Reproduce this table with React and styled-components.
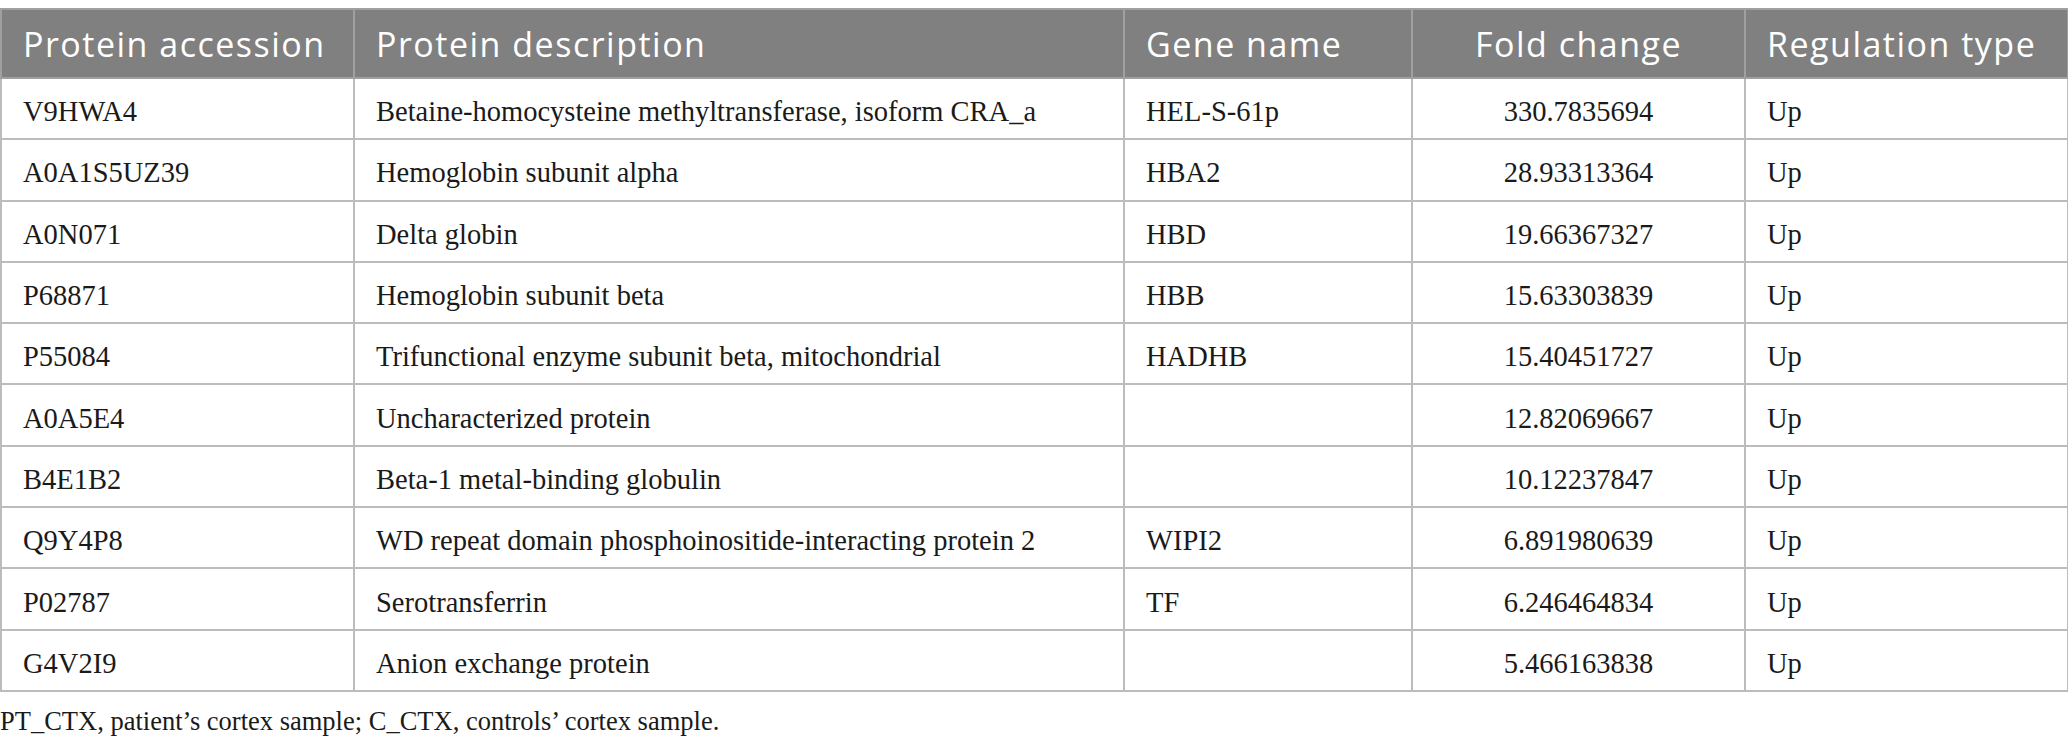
import React from "react";
import styled, { createGlobalStyle } from "styled-components";

const GlobalStyle = createGlobalStyle`
  html, body {
    margin: 0;
    padding: 0;
    background: #ffffff;
  }
`;

const Page = styled.div`
  width: 2068px;
  padding-top: 8px;
  box-sizing: border-box;
`;

const Table = styled.table`
  width: 2067px;
  border-collapse: collapse;
  table-layout: fixed;
  border: 2px solid #bcbcbc;
`;

const HeadCell = styled.th`
  height: 67px;
  padding: 0 0 0 21px;
  background: #808080;
  color: #ffffff;
  font-family: "Open Sans", "Noto Sans", sans-serif;
  font-weight: 400;
  font-size: 34px;
  letter-spacing: 1.5px;
  text-align: ${(p) => (p.$center ? "center" : "left")};
  ${(p) => p.$center && "padding-left: 0;"}
  border: 2px solid #a0a0a0;
  white-space: nowrap;
`;

const Cell = styled.td`
  height: 61.3px;
  padding: 7px 0 0 21px;
  box-sizing: border-box;
  color: #1a1a1a;
  font-family: "Liberation Serif", "Times New Roman", serif;
  font-size: 28.5px;
  text-align: ${(p) => (p.$center ? "center" : "left")};
  ${(p) => p.$center && "padding-left: 0;"}
  border: 2px solid #bcbcbc;
  white-space: nowrap;
`;

const Note = styled.p`
  margin: 14px 0 0 0;
  font-family: "Liberation Serif", "Times New Roman", serif;
  font-size: 26.5px;
  color: #1a1a1a;
`;

const columns = [
  { label: "Protein accession", width: 353 },
  { label: "Protein description", width: 770 },
  { label: "Gene name", width: 288 },
  { label: "Fold change", width: 333, center: true },
  { label: "Regulation type", width: 323 },
];

const rows = [
  ["V9HWA4", "Betaine-homocysteine methyltransferase, isoform CRA_a", "HEL-S-61p", "330.7835694", "Up"],
  ["A0A1S5UZ39", "Hemoglobin subunit alpha", "HBA2", "28.93313364", "Up"],
  ["A0N071", "Delta globin", "HBD", "19.66367327", "Up"],
  ["P68871", "Hemoglobin subunit beta", "HBB", "15.63303839", "Up"],
  ["P55084", "Trifunctional enzyme subunit beta, mitochondrial", "HADHB", "15.40451727", "Up"],
  ["A0A5E4", "Uncharacterized protein", "", "12.82069667", "Up"],
  ["B4E1B2", "Beta-1 metal-binding globulin", "", "10.12237847", "Up"],
  ["Q9Y4P8", "WD repeat domain phosphoinositide-interacting protein 2", "WIPI2", "6.891980639", "Up"],
  ["P02787", "Serotransferrin", "TF", "6.246464834", "Up"],
  ["G4V2I9", "Anion exchange protein", "", "5.466163838", "Up"],
];

export default function App() {
  return (
    <Page>
      <GlobalStyle />
      <Table>
        <colgroup>
          {columns.map((c) => (
            <col key={c.label} style={{ width: c.width }} />
          ))}
        </colgroup>
        <thead>
          <tr>
            {columns.map((c) => (
              <HeadCell key={c.label} $center={c.center}>
                {c.label}
              </HeadCell>
            ))}
          </tr>
        </thead>
        <tbody>
          {rows.map((r) => (
            <tr key={r[0]}>
              {r.map((v, i) => (
                <Cell key={i} $center={columns[i].center}>
                  {v}
                </Cell>
              ))}
            </tr>
          ))}
        </tbody>
      </Table>
      <Note>PT_CTX, patient’s cortex sample; C_CTX, controls’ cortex sample.</Note>
    </Page>
  );
}
